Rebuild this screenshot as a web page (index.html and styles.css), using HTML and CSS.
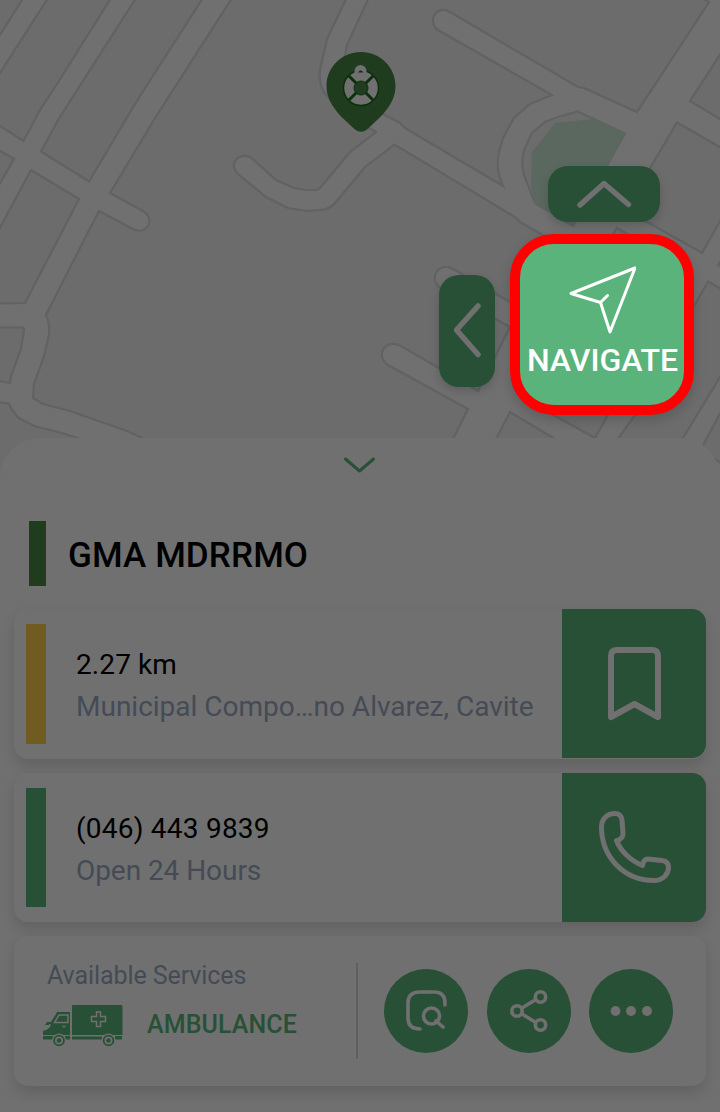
FILE: index.html
```html
<!DOCTYPE html>
<html lang="en">
<head>
<meta charset="utf-8">
<title>GMA MDRRMO</title>
<link rel="stylesheet" href="styles.css">
</head>
<body>
<main class="screen">
  <section class="map">
    <svg class="map-art" viewBox="0 0 720 480" width="720" height="480">
      <g class="blocks">
        <path d="M-5-5H25L22 0 0 35-5 43Z"/>
        <path d="M50-5 0 73-5 80V123L0 126 23.500 141 40 110 57 84 113-5Z"/>
        <path d="M-5 148 14 159-5 192Z"/>
        <path d="M138-5 58 120 41 151.500 89 181.500 135 104 156 71 205-5Z"/>
        <path d="M31 170 79 199 25 303-5 303.500V237Z"/>
        <path d="M-5 327.500H20Q24 327 24 330L21 349 11 376 10 383-5 380Z"/>
        <path d="M-5 401 9 404Q12 411 19 418L34 426 62 433 78 438V485H-5Z"/>
        <path d="M234-5 155 118 110 193 143 211C156 219 147 236 133 229L99 211 85 238 46 315Q50 323 49 335L44 356 34 384 33 398 43 404 70 411 127 431 142 438 150 485H430L468 409 388 365C374 355 386 338 401 346L478 391 510 327 439 287C428 277 440 260 455 270L510 302 550 310 560 245 520 222 515 217 394.500 144.500 365 167 335 203Q329 210 320 210L307 211 288 208 266 197 238 174C226 162 243 148 255 161L276 180 294 188 305 190H316L320 188 350 152 376 132 340 110 327 96Q318 86 320 70L327 39 348-5Z"/>
        <path d="M370-5 347 45Q342 65 346 90L385 115 400 123 405 128 503 186Q495 168 499 152L503 138 514 118 530 104 552 95 438 30C426 21 437 4 450 12L578 87 584 88 637 112 709 2 698-5Z"/>
        <path d="M725 47 690 101 725 122Z"/>
        <path d="M725 150 677 122.500 650 168 626 210 702 253 725 212Z"/>
        <path d="M577.500 111.500 625 133.500 573 226 535 203 524 175Q520 160 525 148L532 133 545 122 558 117Z"/>
        <path d="M617 228 675 262 650 310 580 290Z"/>
        <path d="M725 255 718 265 725 269Z"/>
        <path d="M708 281.500 725 291V369L680 443H615L635 415 692 310Z"/>
        <path d="M510 412 565 445H493Z"/>
        <path d="M530 402 595 438 608 415 640 350 560 340Z"/>
        <path d="M725 404 700 451 725 465Z"/>
      </g>
      <path class="park" d="M555 123 595 119 625 133 572 226 535 203 531 185 532 152Z"/>
    </svg>

    <svg class="pin" viewBox="0 0 70 82" width="70" height="82">
      <path class="pin-body" d="M35 1C16 1 .500 16 .500 35 .500 55 18 68 29 78.500Q35 83 41 78.500C52 68 69.500 55 69.500 35 69.500 16 54 1 35 1Z"/>
      <circle class="pin-ring" cx="35" cy="37" r="17.500"/>
      <path class="pin-spokes" d="M23 25 47 49M47 25 23 49"/>
      <path class="pin-loop" d="M28.500 24V20A6 6 0 0 1 40.500 20V24Z"/>
      <path class="pin-hole" d="M32 21.500Q34.500 17.500 37.500 21.500Z"/>
      <circle class="pin-hub" cx="35" cy="37" r="7"/>
    </svg>

    <button class="pan pan-up" aria-label="Up">
      <svg viewBox="0 0 112 56" width="112" height="56"><path d="M32 39 56 17.500 80.500 38.500"/></svg>
    </button>
    <button class="pan pan-left" aria-label="Left">
      <svg viewBox="0 0 56 112" width="56" height="112"><path d="M39 31 17.500 55 39 79.500"/></svg>
    </button>
    <button class="navigate">
      <svg viewBox="0 0 68 70" width="68" height="70"><path d="M67 3 3 28.500 32.500 37.500 42 67ZM32.500 37.500 39.500 30.500"/></svg>
      <span>NAVIGATE</span>
    </button>
  </section>

  <section class="sheet">
    <svg class="collapse" viewBox="0 0 34 18" width="34" height="18"><path d="M2.500 3 16.500 15 30.500 3"/></svg>
    <header class="title-row">
      <span class="title-bar"></span>
      <h1>GMA MDRRMO</h1>
    </header>

    <div class="cards">
      <article class="card">
        <span class="stripe stripe-yellow"></span>
        <div class="info">
          <p class="primary distance">2.27 km</p>
          <p class="secondary address">Municipal Compo…no Alvarez, Cavite</p>
        </div>
        <button class="action" aria-label="Save">
          <svg viewBox="0 0 144 149" width="144" height="149"><path class="bookmark" d="M49 108V47Q49 41 55 41H90Q96 41 96 47V108L72.500 95Z"/></svg>
        </button>
      </article>

      <article class="card">
        <span class="stripe stripe-green"></span>
        <div class="info">
          <p class="primary phone-no">(046) 443 9839</p>
          <p class="secondary hours">Open 24 Hours</p>
        </div>
        <button class="action" aria-label="Call">
          <svg viewBox="0 0 144 149" width="144" height="149"><path class="phone" d="M53 40.500C45 40.500 39.500 46 39.500 54 39.500 84 62 107.500 92 107.500 101 107.500 106.500 101 106.500 94.500 106.500 90 104 88 100 87.500L86 86Q81.500 86 80.500 92.500C69 88 58.500 78 54.500 67.500Q61.500 66 61 60L60 47Q59 40.500 53 40.500Z"/></svg>
        </button>
      </article>

      <article class="card services">
        <div class="available">
          <p class="services-label">Available Services</p>
          <div class="service">
            <svg class="ambulance" viewBox="0 0 80 43" width="80" height="43">
              <path class="solid" d="M30 1H78Q79.500 1 79.500 2.500V31H29V2Q29 1 30 1ZM14 8H27V31H0V27Q7 25 6.500 21H2L4 18H8L13 10ZM0 32H10V35.500H0ZM22 32H27V35.500H22ZM29 32.500H59V35.500H29ZM72 32H79V35.500H72Z"/>
              <path class="cutline" d="M16 11H25V18.500H11.500ZM3 25Q7 23 7 20M19.500 22.500H22.500M53.500 8H57.500V12.500H62.500V17.500H57.500V22.500H53.500V17.500H48.500V12.500H53.500Z"/>
              <circle class="wheel-gap" cx="16" cy="36.500" r="7"/><circle class="wheel-gap" cx="65.500" cy="36.500" r="7"/>
              <circle class="wheel" cx="16" cy="36.500" r="4.900"/><circle class="wheel" cx="65.500" cy="36.500" r="4.900"/>
              <circle class="solid" cx="16" cy="36.500" r="2.200"/><circle class="solid" cx="65.500" cy="36.500" r="2.200"/>
            </svg>
            <strong>AMBULANCE</strong>
          </div>
        </div>
        <div class="round-actions">
          <button class="round" aria-label="Inspect">
            <svg viewBox="0 0 84 84" width="84" height="84"><path d="M61 36V34Q61 23 50 23H36Q24 23 24 34V49Q24 60 36 60M52 52 59 58"/><circle cx="47.500" cy="47" r="8"/></svg>
          </button>
          <button class="round" aria-label="Share">
            <svg viewBox="0 0 84 84" width="84" height="84"><path d="M35 39 48 31M35 45 48 53"/><circle cx="30" cy="42" r="5.200"/><circle cx="53.500" cy="28" r="5.200"/><circle cx="53.500" cy="56" r="5.200"/></svg>
          </button>
          <button class="round" aria-label="More">
            <svg viewBox="0 0 84 84" width="84" height="84"><g class="dots"><circle cx="26.500" cy="42" r="4.900"/><circle cx="42" cy="42" r="4.900"/><circle cx="58" cy="42" r="4.900"/></g></svg>
          </button>
        </div>
      </article>
    </div>
  </section>
</main>
</body>
</html>
```
FILE: styles.css
```css
* { box-sizing: border-box; }

body {
  margin: 0;
  font-family: Roboto, "Liberation Sans", sans-serif;
  background: #707070;
}

p, h1 { margin: 0; white-space: nowrap; }

button {
  border: 0;
  padding: 0;
  font: inherit;
}

svg { display: block; }

.screen {
  width: 720px;
  height: 1112px;
  overflow: hidden;
  display: flex;
  flex-direction: column;
  background: #6c6c6c;
}

/* Map */
.map {
  position: relative;
  height: 438px;
  flex: none;
}

.map-art { background: #707070; }

.blocks path {
  fill: #6c6c6c;
  stroke: #606263;
  stroke-width: 2.2;
}

.park { fill: #5b685f; }

.pin {
  position: absolute;
  left: 325.5px;
  top: 51px;
}

.pin-body { fill: #203c1e; }
.pin-ring { fill: #707070; stroke: #0c300c; stroke-width: 1.5; }
.pin-spokes { stroke: #0c300c; stroke-width: 3; }
.pin-loop { fill: #707070; }
.pin-hole { fill: #0c300c; }
.pin-hub { fill: #203c1e; stroke: #0c300c; stroke-width: 1; }

.pan {
  position: absolute;
  background: #285036;
  border-radius: 20px;
  box-shadow: 0 4px 10px rgba(0, 0, 0, .16);
}

.pan path {
  fill: none;
  stroke: #707070;
  stroke-width: 5.5;
  stroke-linecap: round;
  stroke-linejoin: round;
}

.pan-up { left: 548px; top: 166px; width: 112px; height: 56px; }
.pan-left { left: 439px; top: 275px; width: 56px; height: 112px; }

.navigate {
  position: absolute;
  left: 510px;
  top: 234px;
  width: 184px;
  height: 181px;
  border: 10px solid #f00;
  border-radius: 44px;
  background: #5ab37b;
  color: #fff;
  display: flex;
  flex-direction: column;
  align-items: center;
  padding-top: 21px;
  box-shadow: 0 5px 12px rgba(0, 0, 0, .16);
}

.navigate path {
  fill: none;
  stroke: #fff;
  stroke-width: 3;
  stroke-linejoin: round;
  stroke-linecap: round;
}

.navigate span {
  font-size: 32px;
  font-weight: 500;
  line-height: 38px;
  margin-top: 6px;
  padding-left: 1px;
}

/* Bottom sheet */
.sheet {
  position: relative;
  flex: 1;
  background: #707070;
  border-radius: 40px 40px 0 0;
  padding: 18px 14px 0;
}

.collapse { margin: 0 auto; }

.collapse path {
  fill: none;
  stroke: #285036;
  stroke-width: 3;
  stroke-linecap: round;
  stroke-linejoin: round;
}

.title-row {
  display: flex;
  align-items: center;
  height: 65px;
  margin: 47px 0 23px 15px;
}

.title-bar {
  width: 17px;
  height: 65px;
  margin-right: 22px;
  background: #203c1e;
}

h1 {
  font-size: 35px;
  font-weight: 500;
  line-height: 42px;
  letter-spacing: .12px;
  color: #000;
  padding-top: 4px;
}

.cards {
  display: flex;
  flex-direction: column;
  gap: 14px;
}

.card {
  display: flex;
  align-items: flex-start;
  height: 150px;
  border-radius: 14px;
  background: #707070;
  box-shadow: 0 7px 14px rgba(0, 0, 0, .13);
}

.card:nth-child(2) { height: 149px; }

.stripe {
  width: 20px;
  height: 120px;
  margin: 15px 30px 0 12px;
}

.card:nth-child(2) .stripe { height: 119px; }

.stripe-yellow { background: #705c20; }
.stripe-green { background: #285036; }

.info {
  flex: 1;
  padding-top: 35px;
  font-size: 28px;
  line-height: 42px;
}

.primary { color: #000; }
.secondary, .services-label { color: #444b56; }
.distance { letter-spacing: .1px; }
.phone-no { letter-spacing: .23px; }
.hours { letter-spacing: -.06px; }

.action {
  width: 144px;
  height: 149px;
  background: #285036;
  border-radius: 0 14px 14px 0;
}

.action path {
  fill: none;
  stroke: #707070;
  stroke-linejoin: round;
}

.bookmark { stroke-width: 6; }
.phone { stroke-width: 5; }

.services { padding: 27px 33px 27px 29px; }

.available {
  width: 315px;
  height: 96px;
  border-right: 2px solid #5c6064;
}

.services-label {
  font-size: 25px;
  line-height: 30px;
  letter-spacing: -.08px;
  padding-left: 4px;
  margin-top: -2px;
}

.service {
  display: flex;
  align-items: center;
  gap: 24px;
  margin-top: 13px;
}

.service strong {
  font-size: 25px;
  font-weight: 500;
  line-height: 30px;
  letter-spacing: .1px;
  color: #285036;
  margin-top: -2px;
}

.ambulance .solid { fill: #285036; }
.ambulance .cutline { fill: none; stroke: #707070; stroke-width: 1.5; }
.ambulance .wheel-gap { fill: #707070; }
.ambulance .wheel { fill: none; stroke: #285036; stroke-width: 1.8; }

.round-actions {
  display: flex;
  gap: 18.5px;
  margin: 6px 0 0 26px;
}

.round {
  width: 84px;
  height: 84px;
  border-radius: 50%;
  background: #285036;
}

.round svg {
  fill: none;
  stroke: #707070;
  stroke-width: 3.6;
  stroke-linecap: round;
}

.round .dots { fill: #707070; stroke: none; }
```
